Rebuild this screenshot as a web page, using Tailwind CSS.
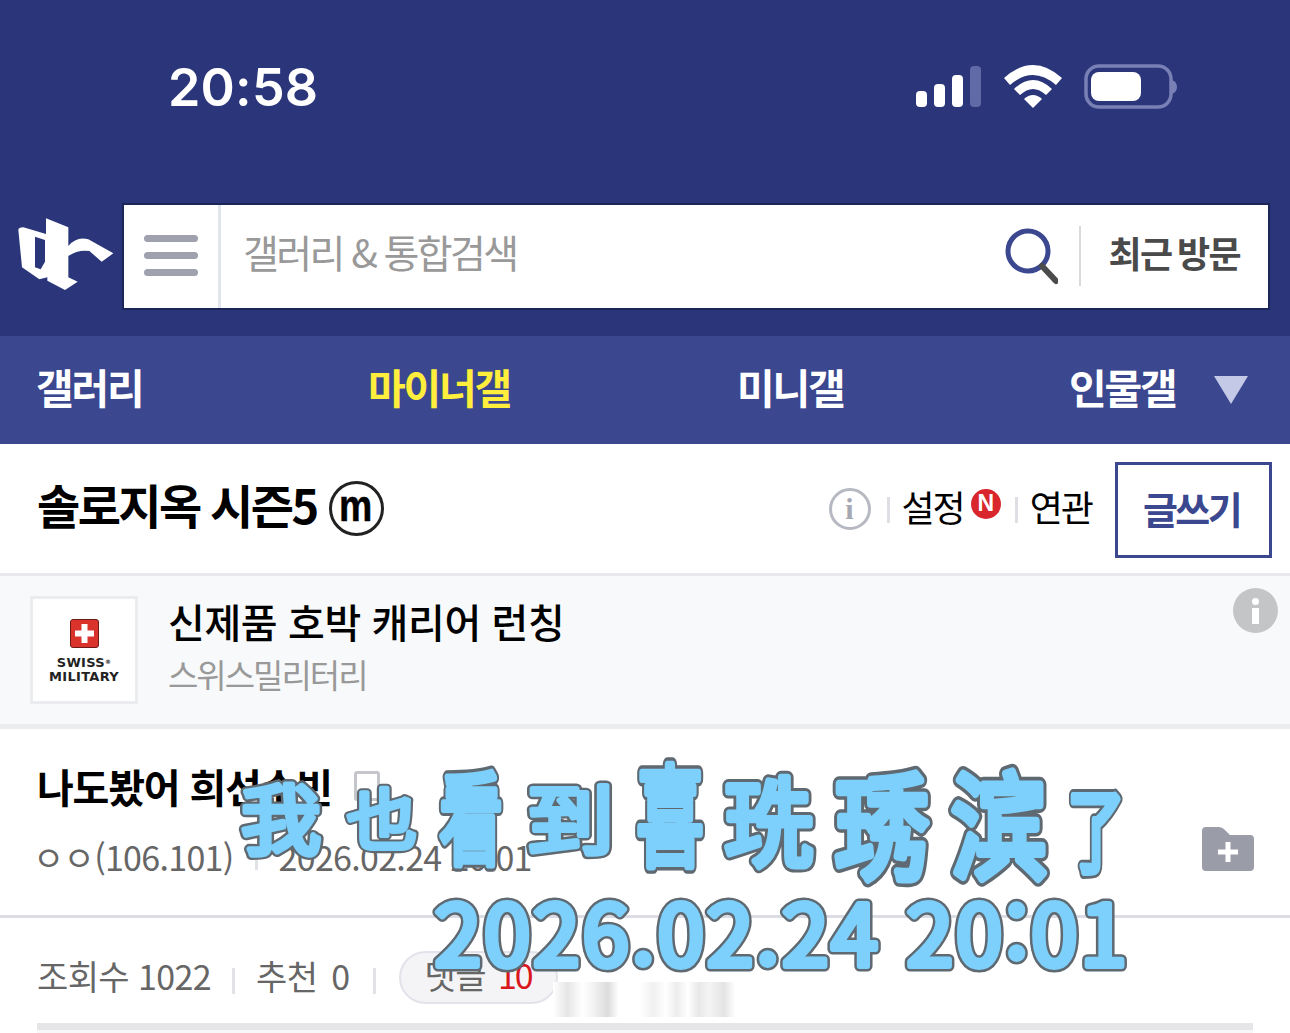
<!DOCTYPE html>
<html lang="ko">
<head>
  <meta charset="UTF-8" />
  <title>솔로지옥 시즌5</title>
  <script src="https://cdn.jsdelivr.net/npm/@tailwindcss/browser@4"></script>
</head>
<body class="bg-white">
<div class="relative w-[1290px] h-[1033px] overflow-hidden bg-white text-black [font-family:'Noto_Sans_CJK_KR',sans-serif]">

  <!-- status bar -->
  <div class="h-[203px] bg-[#2a3679] flex items-start pl-[168px] pt-[55px] pr-[113px] justify-between">
    <span class="text-[52px] leading-[66px] font-semibold text-white tracking-[0.2px] [font-family:Inter,sans-serif]">20:58</span>
    <svg width="261" height="46" viewBox="0 0 261 46" class="mt-[9px]">
      <rect x="0" y="27" width="11" height="16" rx="4" fill="#fff"/>
      <rect x="18" y="20" width="11" height="23" rx="4" fill="#fff"/>
      <rect x="36" y="11" width="11" height="32" rx="4" fill="#fff"/>
      <rect x="54" y="2" width="11" height="41" rx="4" fill="#5f6aa6"/>
      <path d="M88 14 Q117 -12 146 14 L140 21 Q117 1 94 21 Z" fill="#fff"/>
      <path d="M98 25 Q117 7 136 25 L130 31 Q117 19 104 31 Z" fill="#fff"/>
      <path d="M108 35 Q117 27 126 35 L117 44 Z" fill="#fff"/>
      <rect x="170" y="2" width="85" height="41" rx="13" fill="none" stroke="#7880b6" stroke-width="3.5"/>
      <rect x="175" y="8" width="50" height="29" rx="8" fill="#fff"/>
      <path d="M256 16 Q261 18 261 23 Q261 28 256 30 Z" fill="#7880b6"/>
    </svg>
  </div>

  <!-- search row -->
  <div class="h-[133px] bg-[#2a3679] flex items-start">
    <div class="w-[122px] h-[100px] shrink-0 -mt-[13px]">
      <svg width="115" height="100" viewBox="0 0 345 300">
        <path d="M55 120 Q55 112 70 112 L138 132 L138 85 L205 112 L205 168 Q230 138 265 148 L340 190 L305 215 L268 183 Q235 178 205 198 L205 262 L233 275 L195 300 L142 272 L142 262 L118 268 L66 232 Z M105 140 L105 232 L122 238 L135 215 L135 150 Z" fill="#fff" fill-rule="evenodd"/>
      </svg>
    </div>
    <div class="w-[1148px] h-[107px] bg-white border-2 border-[#1c2558] flex items-center">
      <div class="w-[97px] h-full shrink-0 border-r-[3px] border-[#e1e6ec] flex flex-col items-center justify-center gap-[10px] pb-[3px]">
        <span class="block w-[54px] h-[7px] rounded-full bg-[#9fa1ae]"></span>
        <span class="block w-[54px] h-[7px] rounded-full bg-[#9fa1ae]"></span>
        <span class="block w-[54px] h-[7px] rounded-full bg-[#9fa1ae]"></span>
      </div>
      <span class="ml-[22px] -mt-[10px] text-[39px] leading-none text-[#999] tracking-[-2.6px]">갤러리 &amp; 통합검색</span>
      <svg width="54" height="58" viewBox="0 0 54 58" class="ml-auto -mt-[1px]">
        <circle cx="24" cy="24" r="20" fill="none" stroke="#3b478f" stroke-width="5"/>
        <path d="M38 39 L52 54" stroke="#4b4b4b" stroke-width="6" stroke-linecap="round"/>
      </svg>
      <span class="block w-[2px] h-[60px] bg-[#d8dade] ml-[21px] -mt-[2px]"></span>
      <span class="ml-[27px] mr-[28px] -mt-[9px] text-[36px] leading-none font-bold text-[#4a4a4a] tracking-[-1.6px] [word-spacing:-3px]">최근 방문</span>
    </div>
  </div>

  <!-- tabs -->
  <div class="h-[108px] bg-[#3b478f] flex items-center pl-[36px] text-[41px] font-bold tracking-[-2.2px] text-white">
    <span class="w-[332px] -mt-[6px]">갤러리</span>
    <span class="w-[369px] -mt-[6px] text-[#ffee3b]">마이너갤</span>
    <span class="w-[332px] -mt-[6px]">미니갤</span>
    <span class="w-[145px] -mt-[6px]">인물갤</span>
    <svg width="34" height="28" viewBox="0 0 34 28"><path d="M0 0 H34 L17 28 Z" fill="#c3c9e6"/></svg>
  </div>

  <!-- gallery title -->
  <div class="h-[132px] flex items-center pl-[37px] pr-[18px] pt-[3px] border-b-[3px] border-[#e8e9ee]">
    <span class="text-[47px] font-bold tracking-[-2.6px] -mt-[12px]">솔로지옥 시즌5</span>
    <span class="ml-[12px] -mt-[3px] w-[55px] h-[55px] rounded-full border-[3px] border-[#222] flex items-center justify-center text-[44px] leading-none font-bold pb-[5px] [font-family:'Liberation_Sans',sans-serif]"><span class="block scale-x-[.85] [-webkit-text-stroke:0.5px_black]">m</span></span>
    <span class="ml-auto -mt-[3px] w-[42px] h-[42px] rounded-full border-[3px] border-[#b6b8c2] flex items-center justify-center text-[30px] leading-none font-bold text-[#a5a7b2] [font-family:'Liberation_Serif',serif]">i</span>
    <span class="block w-[3px] h-[26px] ml-[16px] bg-[#dddfe5]"></span>
    <span class="ml-[12px] -mt-[8px] text-[36px] tracking-[-2px]">설정</span>
    <span class="ml-[7px] -mt-[13px] w-[30px] h-[30px] rounded-full bg-[#d9262c] flex items-center justify-center text-[23px] leading-none font-bold text-white [font-family:'Liberation_Sans',sans-serif]">N</span>
    <span class="block w-[3px] h-[26px] ml-[14px] bg-[#dddfe5]"></span>
    <span class="ml-[12px] -mt-[8px] text-[36px] tracking-[-2px]">연관</span>
    <span class="ml-[23px] w-[157px] h-[96px] border-[3px] border-[#3b478f] flex items-center justify-center text-[38px] font-bold tracking-[-2.6px] text-[#3b478f]"><span class="-mt-[6px] -ml-[4px]">글쓰기</span></span>
  </div>

  <!-- ad -->
  <div class="relative h-[148px] bg-[#f8f9fb] flex items-center pl-[30px]">
    <div class="w-[108px] h-[108px] shrink-0 border-[3px] border-[#ebecef] bg-white flex flex-col items-center pt-[20px]">
      <span class="w-[29px] h-[29px] rounded-[3px] bg-[#d9332b] border border-[#6e1a16] flex items-center justify-center">
        <svg width="19" height="19" viewBox="0 0 19 19"><path d="M6.5 0 H12.5 V6.5 H19 V12.5 H12.5 V19 H6.5 V12.5 H0 V6.5 H6.5 Z" fill="#fff"/></svg>
      </span>
      <span class="mt-[8px] text-[13px] leading-[14px] font-bold text-center text-[#222] tracking-[0.3px] [font-family:'DejaVu_Sans',sans-serif]">SWISS<sup class="text-[6px]">®</sup><br/>MILITARY</span>
    </div>
    <div class="ml-[30px] -mt-[5px] flex flex-col">
      <span class="text-[40px] leading-[52px] font-medium tracking-[-0.4px]">신제품 호박 캐리어 런칭</span>
      <span class="text-[33px] leading-[54px] text-[#999] tracking-[-2px]">스위스밀리터리</span>
    </div>
    <span class="absolute top-[12px] right-[12px] w-[45px] h-[45px] rounded-full bg-[#c4c5c7] flex flex-col items-center justify-center gap-[3px]">
      <span class="block w-[7px] h-[7px] rounded-full bg-white"></span>
      <span class="block w-[7px] h-[16px] bg-white"></span>
    </span>
  </div>
  <div class="h-[5px] bg-[#eceded]"></div>

  <!-- post head -->
  <div class="relative h-[189px] border-b-[3px] border-[#dcdce4] pl-[37px] pt-[30px]">
    <div class="flex items-center h-[54px]">
      <span class="text-[40px] font-bold tracking-[-1.2px]">나도봤어 희선수빈</span>
      <span class="ml-[22px] w-[26px] h-[30px] rounded-[3px] border-[3px] border-[#c4c6cc]"></span>
    </div>
    <div class="flex items-center mt-[18px] text-[#666] text-[34px] tracking-[-0.7px]">
      <span class="-ml-[4px]">ㅇㅇ(106.101)</span>
      <span class="block w-[3px] h-[26px] mx-[21px] bg-[#e1e2e7]"></span>
      <span>2026.02.24 20:01</span>
    </div>
    <svg width="52" height="44" viewBox="0 0 52 44" class="absolute right-[36px] top-[98px]">
      <path d="M0 4 Q0 0 4 0 H17 Q20 0 23 3 L28 8 H48 Q52 8 52 12 V40 Q52 44 48 44 H4 Q0 44 0 40 Z" fill="#9a9ca8"/>
      <path d="M26 15 V35 M16 25 H36" stroke="#fff" stroke-width="5"/>
    </svg>
  </div>

  <!-- stats -->
  <div class="h-[105px] flex items-start pl-[37px] pt-[33px] text-[#666] text-[34px] tracking-[-0.6px]">
    <span class="leading-[50px]">조회수 1022</span>
    <span class="block w-[3px] h-[26px] mt-[17px] mx-[21px] bg-[#e1e2e7]"></span>
    <span class="leading-[50px] [word-spacing:5px]">추천 0</span>
    <span class="block w-[3px] h-[26px] mt-[17px] mx-[23px] bg-[#e1e2e7]"></span>
    <span class="w-[159px] h-[53px] rounded-full bg-[#f4f4f6] border-2 border-[#e2e3ea] flex items-center pl-[24px] leading-[50px]">
      <span class="-mt-[6px]">댓글</span><span class="-mt-[6px] ml-[12px] text-[#d9161c] tracking-[-2px]">10</span>
    </span>
  </div>
  <div class="mx-[37px] h-[10px] bg-[#f7f7f8] border-t-[7px] border-[#e6e6e8]"></div>

  <!-- blurred patch, soft gradient bars, the filter came out too dark -->
  <div class="absolute left-[553px] top-[982px] w-[182px] h-[35px] bg-[linear-gradient(90deg,#fff,#e6e6e6_8%,#fff_16%,#f3f3f3_22%,#dcdcdc_30%,#fff_36%,#fff_48%,#f0f0f0_55%,#fff_62%,#ececec_68%,#fff_74%,#e8e8e8_80%,#f4f4f4_86%,#e4e4e4_94%,#fff)]"></div>

  <!-- overlay caption, the gray <use> sits under the blue text -->
  <svg class="absolute left-0 top-0" width="1290" height="1033" viewBox="0 0 1290 1033">
    <use href="#caption" fill="#5f6971" stroke="#5f6971" stroke-width="11" stroke-linejoin="round"/>
    <g fill="#7dd0fb" stroke="#7dd0fb" stroke-width="6" stroke-linejoin="round">
      <g id="caption" font-size="80" text-anchor="middle" style="font-family:'Noto Sans CJK SC',sans-serif">
        <text y="29" transform="translate(281 820) scale(1 .95)">我</text>
        <text y="29" transform="translate(382 820) scale(.88 .83)">也</text>
        <text y="29" transform="translate(471 820) scale(.79 1.25)">看</text>
        <text y="29" transform="translate(571 820) scale(1.06 .95)">到</text>
        <text y="29" transform="translate(670 817) scale(.84 1.37)">喜</text>
        <text y="29" transform="translate(769 823) scale(1.11 1.2)">珗</text>
        <text y="29" transform="translate(882 829) scale(1.18 1.43)">琇</text>
        <text y="29" transform="translate(999 827) scale(1.2 1.44)">滨</text>
        <text y="29" transform="translate(1096 832) scale(.72 1.13)">了</text>
        <text x="782" y="966" font-size="84" letter-spacing="2.6">2026.02.24 20:01</text>
      </g>
    </g>
  </svg>
</div>
</body>
</html>
